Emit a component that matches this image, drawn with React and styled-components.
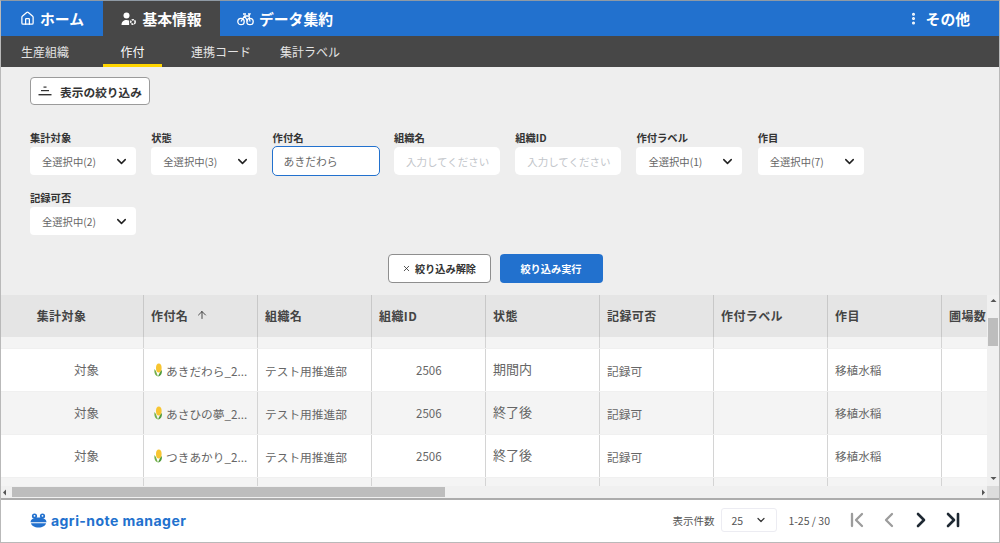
import styled, { createGlobalStyle } from "styled-components";
import { House, ChevronDown, ChevronFirst, ChevronLast, ChevronLeft, ChevronRight, ArrowUp, X, EllipsisVertical } from "lucide-react";

const GlobalStyle = createGlobalStyle`
  html, body { margin: 0; padding: 0; background: #fff; }
  body { font-family: "Noto Sans CJK JP", "Noto Sans", sans-serif; overflow: hidden; }
  * { box-sizing: border-box; }
`;

const Frame = styled.div`
  width: 1000px;
  height: 543px;
  display: flex;
  flex-direction: column;
  border: 1px solid #b9b9b9;
  border-top-color: #8f9aa5;
  overflow: hidden;
`;

const TopNav = styled.nav`
  height: 35px;
  flex: none;
  display: flex;
  background: #2271ce;
  color: #fff;
`;

const TopTab = styled.div`
  display: flex;
  align-items: center;
  justify-content: center;
  gap: 5px;
  width: ${(p) => p.$width}px;
  background: ${(p) => (p.$active ? "#474747" : "transparent")};
  font-size: 14.8px;
  font-weight: 700;
  white-space: nowrap;
`;

const MoreTab = styled(TopTab)`
  margin-left: auto;
  justify-content: flex-end;
  padding-right: 29px;
`;

const SubNav = styled.div`
  height: 31px;
  flex: none;
  display: flex;
  background: #474747;
`;

const SubTab = styled.div`
  width: ${(p) => p.$width}px;
  display: flex;
  align-items: center;
  justify-content: center;
  font-size: 12px;
  white-space: nowrap;
  color: ${(p) => (p.$active ? "#fff" : "#e4e4e4")};
  border-bottom: 3px solid ${(p) => (p.$active ? "#ffd500" : "transparent")};
  padding: 2px ${(p) => p.$padRight || 0}px 0 0;
`;

const FilterArea = styled.section`
  height: 228px;
  flex: none;
  background: #eeeeee;
  padding: 10px 29px 0;
  display: flex;
  flex-direction: column;
`;

const ToggleButton = styled.button`
  width: 120px;
  height: 28px;
  display: flex;
  align-items: center;
  justify-content: center;
  gap: 8px;
  background: #fff;
  border: 1px solid #9b9b9b;
  border-radius: 4px;
  font: 700 11.7px "Noto Sans CJK JP", sans-serif;
  color: #333;
  padding: 0;
`;

const FieldGrid = styled.div`
  display: grid;
  grid-template-columns: repeat(7, 106px);
  column-gap: 15.3px;
  row-gap: 16px;
  margin-top: 26px;
`;

const Field = styled.div`
  display: flex;
  flex-direction: column;
  gap: 3px;
`;

const Label = styled.label`
  font-size: 10.3px;
  font-weight: 700;
  line-height: 13px;
  color: #333;
`;

const SelectBox = styled.div`
  height: 28px;
  background: #fff;
  border-radius: 4px;
  display: flex;
  align-items: center;
  justify-content: space-between;
  padding: 0 7px 0 12px;
  font-size: 10.3px;
  color: #666;
`;

const TextInput = styled.div`
  height: ${(p) => (p.$focused ? "30px" : "28px")};
  margin: ${(p) => (p.$focused ? "-1px -1px -1px -1px" : "0")};
  background: #fff;
  border-radius: 5px;
  border: ${(p) => (p.$focused ? "1.5px solid #2271ce" : "none")};
  display: flex;
  align-items: center;
  padding-left: ${(p) => (p.$focused ? "11px" : "12px")};
  font-size: ${(p) => (p.$focused ? "10.8px" : "10.5px")};
  color: ${(p) => (p.$focused ? "#666" : "#c2c5ca")};
  white-space: nowrap;
  overflow: hidden;
`;

const ButtonRow = styled.div`
  display: flex;
  justify-content: center;
  gap: 9px;
  margin-top: 19px;
  padding-right: 10px;
`;

const ClearButton = styled.button`
  width: 103px;
  height: 29px;
  display: flex;
  align-items: center;
  justify-content: center;
  gap: 4px;
  background: #fff;
  border: 1.5px solid #8e8e8e;
  border-radius: 4px;
  font: 700 10.2px "Noto Sans CJK JP", sans-serif;
  color: #333;
  padding: 0;
`;

const RunButton = styled.button`
  width: 103px;
  height: 29px;
  background: #2271ce;
  border: none;
  border-radius: 4px;
  font: 700 10.2px "Noto Sans CJK JP", sans-serif;
  color: #fff;
  padding: 0;
`;

const TableArea = styled.div`
  flex: 1;
  min-height: 0;
  display: grid;
  grid-template-columns: 1fr 12px;
  grid-template-rows: 1fr 12px;
  background: #f0f0f0;
`;

const TableClip = styled.div`
  overflow: hidden;
  min-width: 0;
`;

const Row = styled.div`
  display: grid;
  grid-template-columns: 143px repeat(7, 114px) 60px;
  height: ${(p) => p.$height}px;
  background: ${(p) => p.$bg};
  margin-top: ${(p) => p.$gap || 0}px;
`;

const HeadCell = styled.div`
  display: flex;
  align-items: center;
  justify-content: ${(p) => (p.$center ? "center" : "flex-start")};
  gap: 8px;
  padding-left: ${(p) => (p.$center ? "0" : "7px")};
  padding-right: ${(p) => (p.$center ? "21px" : "0")};
  padding-bottom: 2px;
  border-right: 1.5px solid #c8c8c8;
  font-size: 12px;
  font-weight: 700;
  color: #444;
  letter-spacing: 0.4px;
  white-space: nowrap;
  overflow: hidden;
`;

const Cell = styled.div`
  display: flex;
  align-items: center;
  justify-content: ${(p) => p.$justify || "flex-start"};
  gap: 3px;
  padding: ${(p) => p.$pad || "0 0 1px 7px"};
  border-right: 1.5px solid #d4d4d4;
  font-size: ${(p) => p.$size || 11.7}px;
  color: #666;
  white-space: nowrap;
  overflow: hidden;
`;

const VScroll = styled.div`
  background: #f0f0f0;
  grid-row: 1;
  grid-column: 2;
  display: flex;
  flex-direction: column;
  align-items: center;
  padding: 3px 0 5px;
`;

const VThumb = styled.div`
  width: 10px;
  height: 28px;
  margin-top: 15px;
  margin-bottom: auto;
  background: #bdbdbd;
`;

const HScroll = styled.div`
  grid-row: 2;
  grid-column: 1;
  background: #f0f0f0;
  display: flex;
  align-items: center;
  padding: 0 1px 0 1px;
`;

const HThumb = styled.div`
  width: 433px;
  height: 10px;
  margin-left: 5px;
  margin-right: auto;
  background: #bdbdbd;
`;

const Corner = styled.div`
  background: #dcdcdc;
`;

const Arrow = styled.svg`
  flex: none;
  fill: #555;
  display: block;
`;

const Footer = styled.footer`
  height: 44px;
  flex: none;
  background: #fff;
  border-top: 2px solid #acacac;
  display: flex;
  align-items: center;
  padding: 0 34px 2px 29px;
`;

const Logo = styled.div`
  display: flex;
  align-items: center;
  gap: 4px;
  font-family: "Inter", sans-serif;
  font-weight: 700;
  font-size: 14px;
  letter-spacing: 0.45px;
  color: #2271ce;
`;

const Pager = styled.div`
  margin-left: auto;
  display: flex;
  align-items: center;
  font-size: 10.5px;
  color: #555;
`;

const PerPage = styled.div`
  width: 56px;
  height: 24px;
  margin: 0 11px 0 7px;
  border: 1px solid #ececf2;
  border-radius: 3px;
  display: flex;
  align-items: center;
  justify-content: space-between;
  padding: 0 9px;
  color: #555;
`;

const PageButtons = styled.div`
  display: flex;
  align-items: center;
  gap: 8px;
  margin-left: 15px;
`;

const PageIcon = styled.span`
  display: flex;
  color: ${(p) => (p.$off ? "#9c9c9c" : "#1f2933")};
`;

const UserCogIcon = () => (
  <svg width="16" height="14" viewBox="0 0 16 14" fill="#fff">
    <circle cx="5.500" cy="3.500" r="3" />
    <path d="M.5 13c0-3.400 2.200-5 5-5 1 0 2 .2 2.600.6V13z" />
    <circle cx="12" cy="10" r="2.200" fill="none" stroke="#fff" strokeWidth="1.500" strokeDasharray="2 .7" />
  </svg>
);

const BikeIcon = () => (
  <svg width="17" height="14" viewBox="0 0 17 14" fill="none" stroke="#fff" strokeWidth="1.300">
    <circle cx="4" cy="9.500" r="3.200" />
    <circle cx="13" cy="9.500" r="3.200" />
    <path d="M4 9.500 7.500 4h4.500l1 5.500M7.500 4 11 9.500M6 2h3M11 2h2l-1 2" />
  </svg>
);

const FilterIcon = () => (
  <svg width="14" height="12" viewBox="0 0 14 12" fill="#333">
    <rect x="5.500" y="1.500" width="3" height="1.200" />
    <rect x="3" y="5" width="8" height="1.200" />
    <rect x=".5" y="9" width="13" height="1.400" />
  </svg>
);

const CornIcon = () => (
  <svg width="10" height="14" viewBox="0 0 10 14">
    <ellipse cx="5.800" cy="5" rx="2.800" ry="4.600" fill="#f7c531" />
    <path d="M1.500 6C1 9.500 2 13 5 13.400 3.800 11 3.600 8.500 1.500 6z" fill="#74b04a" />
    <path d="M8.800 7C9.400 10 8 13 5 13.400 6 11 7 9 8.800 7z" fill="#4f9a3b" />
  </svg>
);

const FrogLogo = () => (
  <svg width="17" height="15" viewBox="0 0 17 15" fill="#2271ce">
    <circle cx="4.500" cy="3" r="2.600" />
    <circle cx="12.500" cy="3" r="2.600" />
    <circle cx="4.500" cy="2.800" r=".9" fill="#fff" />
    <circle cx="12.500" cy="2.800" r=".9" fill="#fff" />
    <path d="M.5 9.200C.8 6 4 4.500 8.500 4.500s7.700 1.500 8 4.700z" />
    <path d="M1 10.300h15c-.6 2.700-3.400 4.200-7.500 4.200S1.600 13 1 10.300z" />
  </svg>
);

const ArrowUpTip = () => <Arrow width="7" height="5" viewBox="0 0 7 5"><path d="M3.500 1 6.500 4h-6z" /></Arrow>;
const ArrowDownTip = () => <Arrow width="7" height="5" viewBox="0 0 7 5"><path d="M3.500 4 .5 1h6z" /></Arrow>;
const ArrowLeftTip = () => <Arrow width="5" height="7" viewBox="0 0 5 7"><path d="M1 3.500 4 .5v6z" /></Arrow>;
const ArrowRightTip = () => <Arrow width="5" height="7" viewBox="0 0 5 7"><path d="M4 3.500 1 .5v6z" /></Arrow>;

const filters = [
  { label: "集計対象", value: "全選択中(2)" },
  { label: "状態", value: "全選択中(3)" },
  { label: "作付名", text: "あきだわら", focused: true },
  { label: "組織名", text: "入力してください" },
  { label: "組織ID", text: "入力してください" },
  { label: "作付ラベル", value: "全選択中(1)" },
  { label: "作目", value: "全選択中(7)" },
  { label: "記録可否", value: "全選択中(2)" },
];

const columns = ["作付名", "組織名", "組織ID", "状態", "記録可否", "作付ラベル", "作目", "圃場数"];

const rows = [
  { name: "あきだわら_2...", status: "期間内", bg: "#fff" },
  { name: "あさひの夢_2...", status: "終了後", bg: "#f4f4f4" },
  { name: "つきあかり_2...", status: "終了後", bg: "#fff" },
];

const App = () => {
  return (
    <>
      <GlobalStyle />
      <Frame>
        <TopNav>
          <TopTab $width={102}><House size={15} strokeWidth={2} />ホーム</TopTab>
          <TopTab $width={117} $active><UserCogIcon />基本情報</TopTab>
          <TopTab $width={130}><BikeIcon />データ集約</TopTab>
          <MoreTab $width={100}><EllipsisVertical size={15} strokeWidth={2.8} />その他</MoreTab>
        </TopNav>
        <SubNav>
          <SubTab $width={102} $padRight={14}>生産組織</SubTab>
          <SubTab $width={59} $active>作付</SubTab>
          <SubTab $width={118}>連携コード</SubTab>
          <SubTab $width={60}>集計ラベル</SubTab>
        </SubNav>
        <FilterArea>
          <ToggleButton><FilterIcon />表示の絞り込み</ToggleButton>
          <FieldGrid>
            {filters.map((f) => (
              <Field key={f.label}>
                <Label>{f.label}</Label>
                {f.value ? (
                  <SelectBox>{f.value}<ChevronDown size={15} color="#222" strokeWidth={2.4} /></SelectBox>
                ) : (
                  <TextInput $focused={f.focused}>{f.text}</TextInput>
                )}
              </Field>
            ))}
          </FieldGrid>
          <ButtonRow>
            <ClearButton><X size={9} strokeWidth={2.2} />絞り込み解除</ClearButton>
            <RunButton>絞り込み実行</RunButton>
          </ButtonRow>
        </FilterArea>
        <TableArea>
          <TableClip>
            <Row $height={42} $bg="#e5e5e5">
              <HeadCell $center>集計対象</HeadCell>
              {columns.map((c, i) => (
                <HeadCell key={c}>
                  {c}
                  {i === 0 && <ArrowUp size={12} color="#222" strokeWidth={1.6} />}
                </HeadCell>
              ))}
            </Row>
            <Row $height={11} $bg="#f4f4f4">
              {[...Array(9)].map((_, i) => <Cell key={i} />)}
            </Row>
            {rows.map((r) => (
              <Row key={r.name} $height={42} $gap={1} $bg={r.bg}>
                <Cell $justify="flex-end" $pad="0 44px 2px 0" $size={12.5}>対象</Cell>
                <Cell $pad="0 0 0 9px"><CornIcon />{r.name}</Cell>
                <Cell $pad="0 0 0 7px">テスト用推進部</Cell>
                <Cell $pad="0 0 0 44px" $size={11.5}>2506</Cell>
                <Cell $size={13} $pad="0 0 3px 7px">{r.status}</Cell>
                <Cell $pad="0 0 0 7px">記録可</Cell>
                <Cell />
                <Cell $size={11.6} $pad="0 0 0 7px">移植水稲</Cell>
                <Cell />
              </Row>
            ))}
            <Row $height={10} $gap={1} $bg="#f4f4f4">
              {[...Array(9)].map((_, i) => <Cell key={i} />)}
            </Row>
          </TableClip>
          <VScroll>
            <ArrowUpTip />
            <VThumb />
            <ArrowDownTip />
          </VScroll>
          <HScroll>
            <ArrowLeftTip />
            <HThumb />
            <ArrowRightTip />
          </HScroll>
          <Corner />
        </TableArea>
        <Footer>
          <Logo><FrogLogo />agri-note manager</Logo>
          <Pager>
            表示件数
            <PerPage>25<ChevronDown size={12} color="#333" strokeWidth={2.4} /></PerPage>
            1-25 / 30
            <PageButtons>
              <PageIcon $off><ChevronFirst size={24} strokeWidth={2.3} /></PageIcon>
              <PageIcon $off><ChevronLeft size={24} strokeWidth={2.3} /></PageIcon>
              <PageIcon><ChevronRight size={24} strokeWidth={2.6} /></PageIcon>
              <PageIcon><ChevronLast size={24} strokeWidth={2.6} /></PageIcon>
            </PageButtons>
          </Pager>
        </Footer>
      </Frame>
    </>
  );
};

export default App;
